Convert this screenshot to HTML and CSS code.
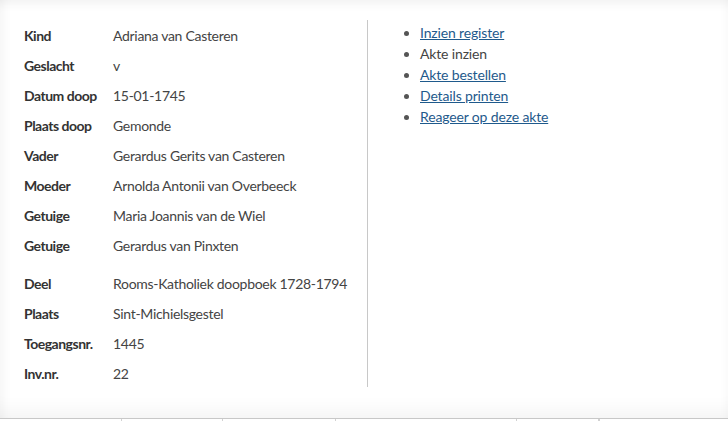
FILE: index.html
```html
<!DOCTYPE html>
<html lang="nl">
<head>
  <meta charset="UTF-8">
  <title>Doop - Adriana van Casteren</title>
  <meta name="viewport" content="width=device-width,initial-scale=1">
  <link rel="stylesheet" href="styles.css">
</head>
<body>
  <div class="record">
    <div class="record-details">
      <table class="details">
        <tr><th>Kind</th><td>Adriana van Casteren</td></tr>
        <tr><th>Geslacht</th><td>v</td></tr>
        <tr><th>Datum doop</th><td>15-01-1745</td></tr>
        <tr><th>Plaats doop</th><td>Gemonde</td></tr>
        <tr><th>Vader</th><td>Gerardus Gerits van Casteren</td></tr>
        <tr><th>Moeder</th><td>Arnolda Antonii van Overbeeck</td></tr>
        <tr><th>Getuige</th><td>Maria Joannis van de Wiel</td></tr>
        <tr><th>Getuige</th><td>Gerardus van Pinxten</td></tr>
      </table>
      <table class="details source">
        <tr><th>Deel</th><td>Rooms-Katholiek doopboek 1728-1794</td></tr>
        <tr><th>Plaats</th><td>Sint-Michielsgestel</td></tr>
        <tr><th>Toegangsnr.</th><td>1445</td></tr>
        <tr><th>Inv.nr.</th><td>22</td></tr>
      </table>
    </div>
    <div class="record-actions">
      <ul class="actions">
        <li><a href="#">Inzien register</a></li>
        <li>Akte inzien</li>
        <li><a href="#">Akte bestellen</a></li>
        <li><a href="#">Details printen</a></li>
        <li><a href="#">Reageer op deze akte</a></li>
      </ul>
    </div>
  </div>
  <div class="results-head">
    <span class="col c1"></span>
    <span class="col c2"></span>
    <span class="col c3"></span>
    <span class="col c4"></span>
    <span class="col c5"></span>
    <span class="col c6"></span>
  </div>
</body>
</html>
```

FILE: styles.css
```css
html, body {
  margin: 0;
  padding: 0;
  font-family: 'Lato', 'Liberation Sans', sans-serif;
  font-size: 14px;
  color: #444;
  background: #fff;
}
body {
  height: 421px;
  overflow: hidden;
}
.record {
  height: 419px;
  box-sizing: border-box;
  display: flex;
  padding: 20px 0 0 0;
  background: #fff;
  box-shadow: inset 0 12px 12px -10px rgba(0,0,0,0.07),
              inset 12px 0 12px -10px rgba(0,0,0,0.05),
              inset 0 -24px 22px -20px rgba(0,0,0,0.06),
              inset -10px 0 12px -10px rgba(0,0,0,0.04);
  border-bottom: 1px solid #c8c8c8;
}
.record-details {
  width: 367px;
  padding-left: 24px;
  box-sizing: border-box;
}
.details {
  border-collapse: collapse;
  letter-spacing: -0.3px;
}
.details th {
  width: 89px;
  padding: 0;
  height: 30px;
  text-align: left;
  font-weight: bold;
  color: #333;
  letter-spacing: -0.5px;
}
.details td {
  padding: 0;
  height: 30px;
}
.details.source {
  margin-top: 8px;
}
.record-actions {
  align-self: flex-start;
  height: 367px;
  border-left: 1px solid #c8c8c8;
  padding-left: 28px;
}
.actions {
  margin: 2px 0 0 0;
  padding-left: 24px;
  line-height: 21px;
  color: #444;
  letter-spacing: -0.15px;
}
.actions li::marker {
  color: #555;
}
.actions a {
  color: #1f5a8c;
}
.results-head {
  display: flex;
  height: 2px;
}
.results-head .col {
  border-right: 1px solid #d2d2d2;
}
.c1 { width: 121px; }
.c2 { width: 100px; }
.c3 { width: 112px; }
.c4 { width: 180px; }
.c5 { width: 81px; }
```
